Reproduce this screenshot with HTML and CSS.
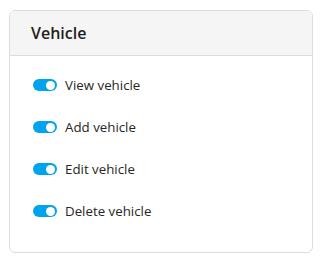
FILE: index.html
```html
<!DOCTYPE html>
<html>
<head>
<meta charset="utf-8">
<link rel="stylesheet" href="styles.css">
</head>
<body>
<div class="card">
  <div class="card-header">Vehicle</div>
  <div class="card-body">
    <div class="row"><span class="toggle"><span class="knob"></span></span><span class="label">View vehicle</span></div>
    <div class="row"><span class="toggle"><span class="knob"></span></span><span class="label">Add vehicle</span></div>
    <div class="row"><span class="toggle"><span class="knob"></span></span><span class="label">Edit vehicle</span></div>
    <div class="row"><span class="toggle"><span class="knob"></span></span><span class="label">Delete vehicle</span></div>
  </div>
</div>
</body>
</html>
```
FILE: styles.css
```css
html, body { margin: 0; padding: 0; background: #fff; }
body {
  padding: 10px 0 0 9px;
  font-family: "Open Sans", "Noto Sans", sans-serif;
  color: #222;
}
.card {
  width: 302px;
  height: 241px;
  border: 1px solid #dcdcdc;
  border-radius: 6px;
  overflow: hidden;
}
.card-header {
  height: 44px;
  background: #f5f5f5;
  border-bottom: 1px solid #dcdcdc;
  display: flex;
  align-items: center;
  padding-left: 21px;
  font-size: 16px;
  font-weight: 600;
  color: #1e1e1e;
}
.card-body {
  padding: 8px 0 0 23px;
}
.row {
  height: 42px;
  display: flex;
  align-items: center;
  gap: 8px;
}
.toggle {
  width: 24px;
  height: 12px;
  border-radius: 6px;
  background: #00a3ee;
  display: flex;
  align-items: center;
  justify-content: flex-end;
  padding: 0 2px;
  box-sizing: border-box;
}
.knob {
  width: 9px;
  height: 9px;
  border-radius: 50%;
  background: #fff;
}
.label {
  font-size: 13.3px;
  color: #262626;
}
```
